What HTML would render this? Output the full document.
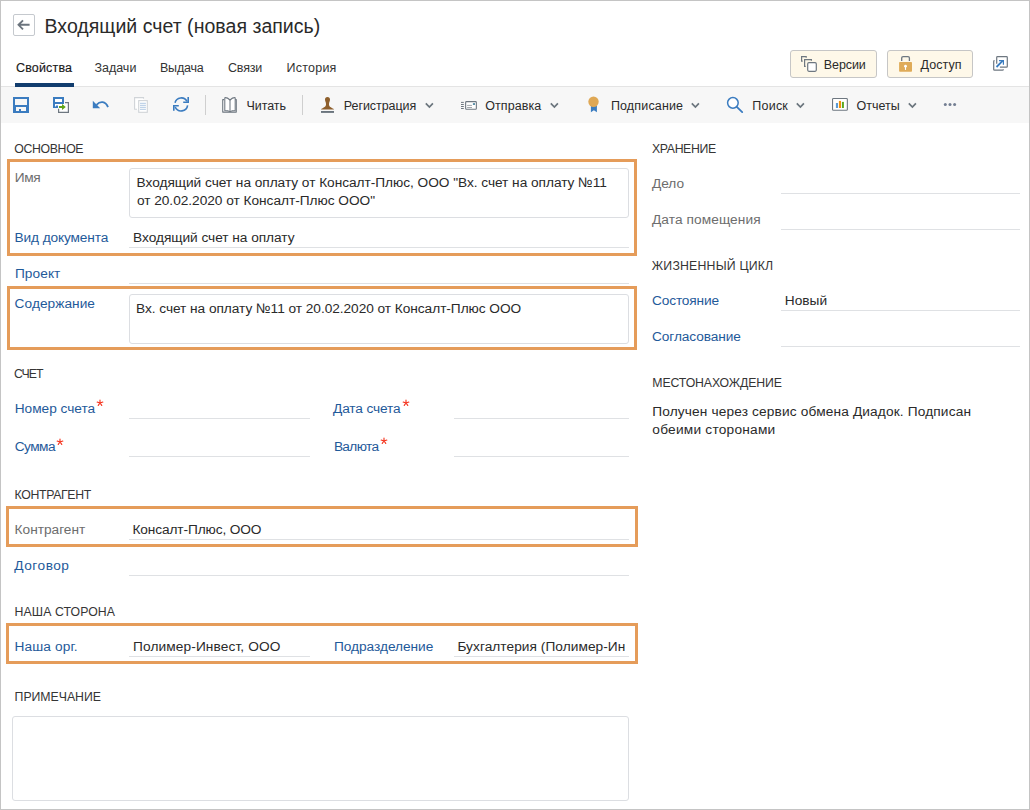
<!DOCTYPE html>
<html><head><meta charset="utf-8"><style>
html,body{margin:0;padding:0;}
body{width:1030px;height:810px;position:relative;overflow:hidden;background:#fff;font-family:"Liberation Sans",sans-serif;}
.frame{position:absolute;left:0;top:0;width:1030px;height:810px;box-sizing:border-box;border:1px solid #c4c4c4;pointer-events:none;}
.t{position:absolute;white-space:nowrap;line-height:20px;}
svg{display:block;}
</style></head><body>
<div style="position:absolute;left:13px;top:14px;width:22px;height:22px;box-sizing:border-box;border:1px solid #c5c9ce;border-radius:2px;"></div>
<svg style="position:absolute;left:13px;top:14px" width="22" height="22" viewBox="0 0 22 22"><path d="M16.6 10.8 H5.4 M10 6.3 L5.5 10.8 L10 15.3" fill="none" stroke="#6b747d" stroke-width="1.9"/></svg>
<div class="t" style="left:44.50px;top:16.00px;font-size:19.5px;color:#2a2a2a;letter-spacing:0.033px;">Входящий счет (новая запись)</div>
<div class="t" style="left:16.00px;top:58.00px;font-size:12.5px;color:#1a1a1a;letter-spacing:0.157px;-webkit-text-stroke:0.15px #1a1a1a;">Свойства</div>
<div class="t" style="left:94.40px;top:58.00px;font-size:12.5px;color:#333;">Задачи</div>
<div class="t" style="left:160.00px;top:58.00px;font-size:12.5px;color:#333;letter-spacing:-0.220px;">Выдача</div>
<div class="t" style="left:228.00px;top:58.00px;font-size:12.5px;color:#333;letter-spacing:-0.200px;">Связи</div>
<div class="t" style="left:286.60px;top:58.00px;font-size:12.5px;color:#333;letter-spacing:0.217px;">История</div>
<div style="position:absolute;left:1px;top:86px;width:1028px;height:1px;background:#e4e4e4;"></div>
<div style="position:absolute;left:15px;top:83px;width:59px;height:4px;background:#123d6e;"></div>
<div style="position:absolute;left:790px;top:50px;width:87px;height:28px;box-sizing:border-box;border:1px solid #c6c6c6;border-radius:3px;background:#fef8e9;"></div>
<svg style="position:absolute;left:798px;top:53px" width="22" height="22" viewBox="0 0 22 22"><path d="M8.2 4.7 V3.6 H3.6 V8.2 H4.7 M13.4 7.7 V6.6 H6.6 V13.4 H7.7" fill="none" stroke="#6e7780" stroke-width="1.2"/><rect x="9.7" y="9.7" width="8.6" height="8.6" rx="1.2" fill="#fff" stroke="#6e7780" stroke-width="1.2"/></svg>
<div class="t" style="left:823.80px;top:55.00px;font-size:12.5px;color:#2a2a2a;letter-spacing:-0.100px;">Версии</div>
<div style="position:absolute;left:887px;top:50px;width:86px;height:28px;box-sizing:border-box;border:1px solid #c6c6c6;border-radius:3px;background:#fef8e9;"></div>
<svg style="position:absolute;left:895px;top:53px" width="22" height="22" viewBox="0 0 22 22"><path d="M6.7 8 V5 Q6.7 3.6 8.1 3.6 H13 Q14.4 3.6 14.4 5 V8" fill="none" stroke="#6e7780" stroke-width="1.3"/><rect x="4.1" y="9" width="12.9" height="9.7" rx="0.8" fill="#dfab58"/><circle cx="10.5" cy="13.2" r="1.4" fill="#fff"/><rect x="9.95" y="13.5" width="1.1" height="3.4" fill="#fff"/></svg>
<div class="t" style="left:920.50px;top:55.00px;font-size:12.5px;color:#2a2a2a;letter-spacing:0.060px;">Доступ</div>
<svg style="position:absolute;left:989px;top:52px" width="22" height="22" viewBox="0 0 22 22"><path d="M7.7 11.7 V5.5 Q7.7 4.7 8.5 4.7 H17.5 Q18.3 4.7 18.3 5.5 V14.4 Q18.3 15.2 17.5 15.2 H10.9" fill="none" stroke="#6e7780" stroke-width="1.2"/><path d="M5.6 8.6 H5.5 Q4.7 8.6 4.7 9.4 V17.4 Q4.7 18.2 5.5 18.2 H13.5 Q14.3 18.2 14.3 17.4 V17.2" fill="none" stroke="#6e7780" stroke-width="1.2"/><path d="M7.5 15 L13.6 8.9" stroke="#3a7cc0" stroke-width="1.8"/><path d="M10 7.9 H15 V12.8 H13.8 V9.2 H10 Z" fill="#3a7cc0"/></svg>
<div style="position:absolute;left:1px;top:87px;width:1028px;height:36px;background:#f7f7f7;"></div>
<svg style="position:absolute;left:13px;top:97px" width="16" height="16" viewBox="0 0 16 16"><path fill="#3b7cc0" fill-rule="evenodd" d="M0 0H16V16H0Z M2 2V8H14V2Z M3 10V14H6V12H8V14H13V10Z"/></svg>
<svg style="position:absolute;left:53px;top:97px" width="16" height="16" viewBox="0 0 16 16"><rect x="5.6" y="5.6" width="9.8" height="9.8" fill="#fff"/><path d="M12 5.6 H15.4 V15.4 H5.6 V11.8" fill="none" stroke="#6e7780" stroke-width="1.2"/><rect x="2" y="2" width="7" height="7.5" fill="#fff"/><path fill="#3b7cc0" d="M0 0H11V7H9V2H2V5H9V7H2V9.5H3V8.6H5V11H0Z"/><path fill="#5fa319" d="M6 9 H9 V7 L12.8 10 L9 13 V11 H6 Z"/></svg>
<svg style="position:absolute;left:92px;top:99px" width="17" height="11" viewBox="0 0 17 11"><path d="M4.5 5.8 C8 2 13.5 1.8 16 8.2" fill="none" stroke="#3b7cc0" stroke-width="1.8"/><path d="M0.8 1.8 L0.8 9.2 L8.2 9.2 Z" fill="#3b7cc0"/></svg>
<svg style="position:absolute;left:133px;top:96px" width="16" height="18" viewBox="0 0 16 18"><rect x="1.6" y="1.6" width="9" height="12" fill="#fff"/><path d="M4 13.3 H1.6 V1.6 H10.5 V2.8" fill="none" stroke="#d0d4d8" stroke-width="1.1"/><rect x="5.7" y="4.6" width="8.6" height="11.7" fill="#fff" stroke="#d0d4d8" stroke-width="1.1"/><path d="M7 7.4 H12.9 M7 9.4 H12.9 M7 11.4 H12.9 M7 13.4 H12.9" stroke="#c0d3e8" stroke-width="1.1"/></svg>
<svg style="position:absolute;left:170px;top:93px" width="22" height="22" viewBox="0 0 22 22"><path d="M5 9.8 A6.5 6.5 0 0 1 17 8.3 M17.6 12.3 A6.5 6.5 0 0 1 5.2 14" fill="none" stroke="#3b7cc0" stroke-width="1.6"/><path d="M18.2 4 V9.2 H13.2 M3.8 17.8 V12.8 H8.8" fill="none" stroke="#3b7cc0" stroke-width="1.6"/><path d="M18.9 8 V9.9 H16.5 Z M3.1 14 V12.1 H5.5 Z" fill="#3b7cc0"/></svg>
<div style="position:absolute;left:205px;top:95px;width:1px;height:20px;background:#cfcfcf;"></div>
<div style="position:absolute;left:302px;top:95px;width:1px;height:20px;background:#cfcfcf;"></div>
<svg style="position:absolute;left:219px;top:94px" width="22" height="22" viewBox="0 0 22 22"><path d="M5.2 5.6 H3.7 V18.1 H17.3 V5.6 H15.8" fill="none" stroke="#6e7780" stroke-width="1.05" stroke-linejoin="round"/><path d="M11 6 Q8 3.3 5.8 3.7 V16.4 Q9 16.4 11 17.6 Q13 16.4 16.2 16.4 V3.7 Q14 3.3 11 6 Z" fill="#fff" stroke="#6e7780" stroke-width="1.05" stroke-linejoin="round"/><path d="M11 6 V18" stroke="#6e7780" stroke-width="1.05"/></svg>
<div class="t" style="left:246.50px;top:96.00px;font-size:12.5px;color:#2a2a2a;letter-spacing:-0.080px;">Читать</div>
<svg style="position:absolute;left:317px;top:94px" width="22" height="22" viewBox="0 0 22 22"><path d="M10.5 3 C8.8 3 8 4.2 8 5.6 C8 7.3 9 8.3 9 10 C9 12 8.5 13 4.2 14.9 Q3.8 15.6 4.6 15.6 H16.4 Q17.2 15.6 16.8 14.9 C12.5 13 12 12 12 10 C12 8.3 13 7.3 13 5.6 C13 4.2 12.2 3 10.5 3 Z" fill="#8e5f2c"/><rect x="4" y="17" width="13" height="1.9" fill="#6a747d"/></svg>
<div class="t" style="left:343.80px;top:96.00px;font-size:12.5px;color:#2a2a2a;letter-spacing:-0.070px;">Регистрация</div>
<svg style="position:absolute;left:424.5px;top:101.5px" width="9" height="7" viewBox="0 0 9 7"><path d="M0.8 1.4 L4.4 5 L7.9 1.4" fill="none" stroke="#6b757d" stroke-width="1.7"/></svg>
<svg style="position:absolute;left:458px;top:94px" width="22" height="22" viewBox="0 0 22 22"><path d="M3 8.4 H5.8 M3 10.5 H5.8 M3 12.5 H5.8 M3 14.5 H5.8" stroke="#6e7780" stroke-width="1"/><rect x="7.65" y="7.65" width="10.7" height="7.6" rx="0.8" fill="#fff" stroke="#6e7780" stroke-width="1.1"/><path d="M9.1 11.4 H14 M9.1 13.5 H14" stroke="#a4a9ae" stroke-width="1"/><rect x="14.9" y="9.1" width="2.1" height="1.9" fill="#5a90a8"/></svg>
<div class="t" style="left:485.30px;top:96.00px;font-size:12.5px;color:#2a2a2a;letter-spacing:0.057px;">Отправка</div>
<svg style="position:absolute;left:549.5px;top:101.5px" width="9" height="7" viewBox="0 0 9 7"><path d="M0.8 1.4 L4.4 5 L7.9 1.4" fill="none" stroke="#6b757d" stroke-width="1.7"/></svg>
<svg style="position:absolute;left:583px;top:94px" width="22" height="22" viewBox="0 0 22 22"><path d="M7.9 11.5 V18.2 L10.9 16.3 L13.9 18.2 V11.5 Z" fill="#3a7cc0"/><circle cx="10.5" cy="7.8" r="5.2" fill="#dfa855"/></svg>
<div class="t" style="left:610.90px;top:96.00px;font-size:12.5px;color:#2a2a2a;letter-spacing:0.156px;">Подписание</div>
<svg style="position:absolute;left:690.5px;top:101.5px" width="9" height="7" viewBox="0 0 9 7"><path d="M0.8 1.4 L4.4 5 L7.9 1.4" fill="none" stroke="#6b757d" stroke-width="1.7"/></svg>
<svg style="position:absolute;left:724px;top:94px" width="22" height="22" viewBox="0 0 22 22"><circle cx="8.9" cy="8.85" r="5.3" fill="#fff" stroke="#3b7cc0" stroke-width="1.5"/><path d="M12.8 12.8 L18.2 18.1" stroke="#3b7cc0" stroke-width="1.8" stroke-linecap="round"/></svg>
<div class="t" style="left:752.30px;top:96.00px;font-size:12.5px;color:#2a2a2a;letter-spacing:0.225px;">Поиск</div>
<svg style="position:absolute;left:795.5px;top:101.5px" width="9" height="7" viewBox="0 0 9 7"><path d="M0.8 1.4 L4.4 5 L7.9 1.4" fill="none" stroke="#6b757d" stroke-width="1.7"/></svg>
<svg style="position:absolute;left:829px;top:94px" width="22" height="22" viewBox="0 0 22 22"><rect x="3.55" y="4.45" width="14.8" height="11.85" rx="0.9" fill="#fff" stroke="#6e7780" stroke-width="1.1"/><rect x="6.9" y="9" width="2.1" height="5" fill="#5b9bd5"/><rect x="9.9" y="6.9" width="2.1" height="7.1" fill="#f0900a"/><rect x="12.9" y="7.9" width="2" height="6.1" fill="#5ba81e"/></svg>
<div class="t" style="left:856.60px;top:96.00px;font-size:12.5px;color:#2a2a2a;letter-spacing:-0.020px;">Отчеты</div>
<svg style="position:absolute;left:907.5px;top:101.5px" width="9" height="7" viewBox="0 0 9 7"><path d="M0.8 1.4 L4.4 5 L7.9 1.4" fill="none" stroke="#6b757d" stroke-width="1.7"/></svg>
<svg style="position:absolute;left:940px;top:100px" width="20" height="9" viewBox="0 0 20 9"><circle cx="5.3" cy="4.6" r="1.5" fill="#737e92"/><circle cx="10" cy="4.6" r="1.5" fill="#737e92"/><circle cx="14.6" cy="4.6" r="1.5" fill="#737e92"/></svg>
<div class="t" style="left:14.30px;top:139.00px;font-size:12.3px;color:#353535;letter-spacing:-0.357px;">ОСНОВНОЕ</div>
<div style="position:absolute;left:7px;top:159px;width:630px;height:97px;box-sizing:border-box;border:3px solid #e59c5a;"></div>
<div class="t" style="left:14.80px;top:168.00px;font-size:13.7px;color:#6d6d6d;letter-spacing:-0.350px;">Имя</div>
<div style="position:absolute;left:129px;top:168px;width:500px;height:50px;box-sizing:border-box;border:1px solid #dcdee2;border-radius:3px;"></div>
<div class="t" style="left:136.60px;top:173.00px;font-size:13.7px;color:#2a2a2a;letter-spacing:-0.037px;">Входящий счет на оплату от Консалт-Плюс, ООО &quot;Вх. счет на оплату №11</div>
<div class="t" style="left:136.90px;top:191.00px;font-size:13.7px;color:#2a2a2a;letter-spacing:-0.027px;">от 20.02.2020 от Консалт-Плюс ООО&quot;</div>
<div class="t" style="left:14.60px;top:228.00px;font-size:13.7px;color:#1f5a9a;letter-spacing:-0.125px;">Вид документа</div>
<div class="t" style="left:133.10px;top:228.00px;font-size:13.7px;color:#2a2a2a;letter-spacing:-0.041px;">Входящий счет на оплату</div>
<div style="position:absolute;left:129px;top:247px;width:500px;height:1px;background:#dfe1e4;"></div>
<div class="t" style="left:14.90px;top:264.00px;font-size:13.7px;color:#1f5a9a;letter-spacing:0.080px;">Проект</div>
<div style="position:absolute;left:129px;top:283px;width:500px;height:1px;background:#dfe1e4;"></div>
<div style="position:absolute;left:7px;top:286px;width:630px;height:64px;box-sizing:border-box;border:3px solid #e59c5a;"></div>
<div class="t" style="left:14.60px;top:294.00px;font-size:13.7px;color:#1f5a9a;letter-spacing:0.044px;">Содержание</div>
<div style="position:absolute;left:129px;top:294px;width:500px;height:50px;box-sizing:border-box;border:1px solid #dcdee2;border-radius:3px;"></div>
<div class="t" style="left:136.00px;top:299.00px;font-size:13.7px;color:#2a2a2a;letter-spacing:-0.045px;">Вх. счет на оплату №11 от 20.02.2020 от Консалт-Плюс ООО</div>
<div class="t" style="left:14.00px;top:364.00px;font-size:12.3px;color:#353535;letter-spacing:-0.967px;">СЧЕТ</div>
<div class="t" style="left:14.70px;top:399.00px;font-size:13.7px;color:#1f5a9a;letter-spacing:-0.010px;">Номер счета</div>
<svg style="position:absolute;left:91.90px;top:395.20px" width="16" height="16" viewBox="0 0 16 16"><path d="M8 8 L8.00 5.00 M8 8 L10.85 7.07 M8 8 L9.76 10.43 M8 8 L6.24 10.43 M8 8 L5.15 7.07 " stroke="#f5301a" stroke-width="1.1" stroke-linecap="round" fill="none"/></svg>
<div style="position:absolute;left:129px;top:418px;width:181px;height:1px;background:#dfe1e4;"></div>
<div class="t" style="left:333.00px;top:399.00px;font-size:13.7px;color:#1f5a9a;letter-spacing:-0.144px;">Дата счета</div>
<svg style="position:absolute;left:397.50px;top:395.30px" width="16" height="16" viewBox="0 0 16 16"><path d="M8 8 L8.00 5.00 M8 8 L10.85 7.07 M8 8 L9.76 10.43 M8 8 L6.24 10.43 M8 8 L5.15 7.07 " stroke="#f5301a" stroke-width="1.1" stroke-linecap="round" fill="none"/></svg>
<div style="position:absolute;left:454px;top:418px;width:175px;height:1px;background:#dfe1e4;"></div>
<div class="t" style="left:14.70px;top:437.00px;font-size:13.7px;color:#1f5a9a;letter-spacing:-0.525px;">Сумма</div>
<svg style="position:absolute;left:52.20px;top:433.80px" width="16" height="16" viewBox="0 0 16 16"><path d="M8 8 L8.00 5.00 M8 8 L10.85 7.07 M8 8 L9.76 10.43 M8 8 L6.24 10.43 M8 8 L5.15 7.07 " stroke="#f5301a" stroke-width="1.1" stroke-linecap="round" fill="none"/></svg>
<div style="position:absolute;left:129px;top:456px;width:181px;height:1px;background:#dfe1e4;"></div>
<div class="t" style="left:333.90px;top:437.00px;font-size:13.7px;color:#1f5a9a;letter-spacing:-0.660px;">Валюта</div>
<svg style="position:absolute;left:375.70px;top:433.10px" width="16" height="16" viewBox="0 0 16 16"><path d="M8 8 L8.00 5.00 M8 8 L10.85 7.07 M8 8 L9.76 10.43 M8 8 L6.24 10.43 M8 8 L5.15 7.07 " stroke="#f5301a" stroke-width="1.1" stroke-linecap="round" fill="none"/></svg>
<div style="position:absolute;left:454px;top:456px;width:175px;height:1px;background:#dfe1e4;"></div>
<div class="t" style="left:14.60px;top:485.00px;font-size:12.3px;color:#353535;letter-spacing:-0.356px;">КОНТРАГЕНТ</div>
<div style="position:absolute;left:6px;top:506px;width:632px;height:41px;box-sizing:border-box;border:3px solid #e59c5a;"></div>
<div class="t" style="left:14.60px;top:520.00px;font-size:13.7px;color:#6d6d6d;letter-spacing:-0.011px;">Контрагент</div>
<div class="t" style="left:132.50px;top:520.00px;font-size:13.7px;color:#2a2a2a;letter-spacing:-0.119px;">Консалт-Плюс, ООО</div>
<div style="position:absolute;left:129px;top:539px;width:500px;height:1px;background:#dfe1e4;"></div>
<div class="t" style="left:14.30px;top:556.00px;font-size:13.7px;color:#1f5a9a;letter-spacing:0.500px;">Договор</div>
<div style="position:absolute;left:129px;top:575px;width:500px;height:1px;background:#dfe1e4;"></div>
<div class="t" style="left:14.60px;top:602.00px;font-size:12.3px;color:#353535;letter-spacing:0.073px;">НАША СТОРОНА</div>
<div style="position:absolute;left:6px;top:623px;width:632px;height:41px;box-sizing:border-box;border:3px solid #e59c5a;"></div>
<div class="t" style="left:14.60px;top:637.00px;font-size:13.7px;color:#1f5a9a;letter-spacing:0.100px;">Наша орг.</div>
<div class="t" style="left:133.00px;top:637.00px;font-size:13.7px;color:#2a2a2a;letter-spacing:0.117px;">Полимер-Инвест, ООО</div>
<div style="position:absolute;left:129px;top:656px;width:181px;height:1px;background:#dfe1e4;"></div>
<div class="t" style="left:334.00px;top:637.00px;font-size:13.7px;color:#1f5a9a;letter-spacing:-0.033px;">Подразделение</div>
<div class="t" style="left:457.40px;top:637.00px;font-size:13.7px;color:#2a2a2a;letter-spacing:0.050px;">Бухгалтерия (Полимер-Ин</div>
<div style="position:absolute;left:454px;top:656px;width:175px;height:1px;background:#dfe1e4;"></div>
<div class="t" style="left:14.60px;top:687.00px;font-size:12.3px;color:#353535;letter-spacing:-0.033px;">ПРИМЕЧАНИЕ</div>
<div style="position:absolute;left:12px;top:716px;width:617px;height:85px;box-sizing:border-box;border:1px solid #dcdee2;border-radius:3px;"></div>
<div class="t" style="left:652.00px;top:139.00px;font-size:12.3px;color:#353535;letter-spacing:-0.386px;">ХРАНЕНИЕ</div>
<div class="t" style="left:652.00px;top:174.00px;font-size:13.7px;color:#6d6d6d;letter-spacing:-0.033px;">Дело</div>
<div style="position:absolute;left:781px;top:193px;width:239px;height:1px;background:#dfe1e4;"></div>
<div class="t" style="left:652.00px;top:210.00px;font-size:13.7px;color:#6d6d6d;letter-spacing:0.085px;">Дата помещения</div>
<div style="position:absolute;left:781px;top:229px;width:239px;height:1px;background:#dfe1e4;"></div>
<div class="t" style="left:651.80px;top:256.00px;font-size:12.3px;color:#353535;letter-spacing:0.200px;">ЖИЗНЕННЫЙ ЦИКЛ</div>
<div class="t" style="left:652.00px;top:291.00px;font-size:13.7px;color:#1f5a9a;letter-spacing:-0.150px;">Состояние</div>
<div class="t" style="left:784.80px;top:291.00px;font-size:13.7px;color:#2a2a2a;">Новый</div>
<div style="position:absolute;left:781px;top:310px;width:239px;height:1px;background:#dfe1e4;"></div>
<div class="t" style="left:652.00px;top:327.00px;font-size:13.7px;color:#1f5a9a;letter-spacing:-0.091px;">Согласование</div>
<div style="position:absolute;left:781px;top:346px;width:239px;height:1px;background:#dfe1e4;"></div>
<div class="t" style="left:652.30px;top:373.00px;font-size:12.3px;color:#353535;letter-spacing:-0.129px;">МЕСТОНАХОЖДЕНИЕ</div>
<div class="t" style="left:652.30px;top:402.00px;font-size:13.7px;color:#2a2a2a;letter-spacing:0.142px;">Получен через сервис обмена Диадок. Подписан</div>
<div class="t" style="left:652.30px;top:420.00px;font-size:13.7px;color:#2a2a2a;letter-spacing:0.233px;">обеими сторонами</div>
<div class="frame"></div>
</body></html>
